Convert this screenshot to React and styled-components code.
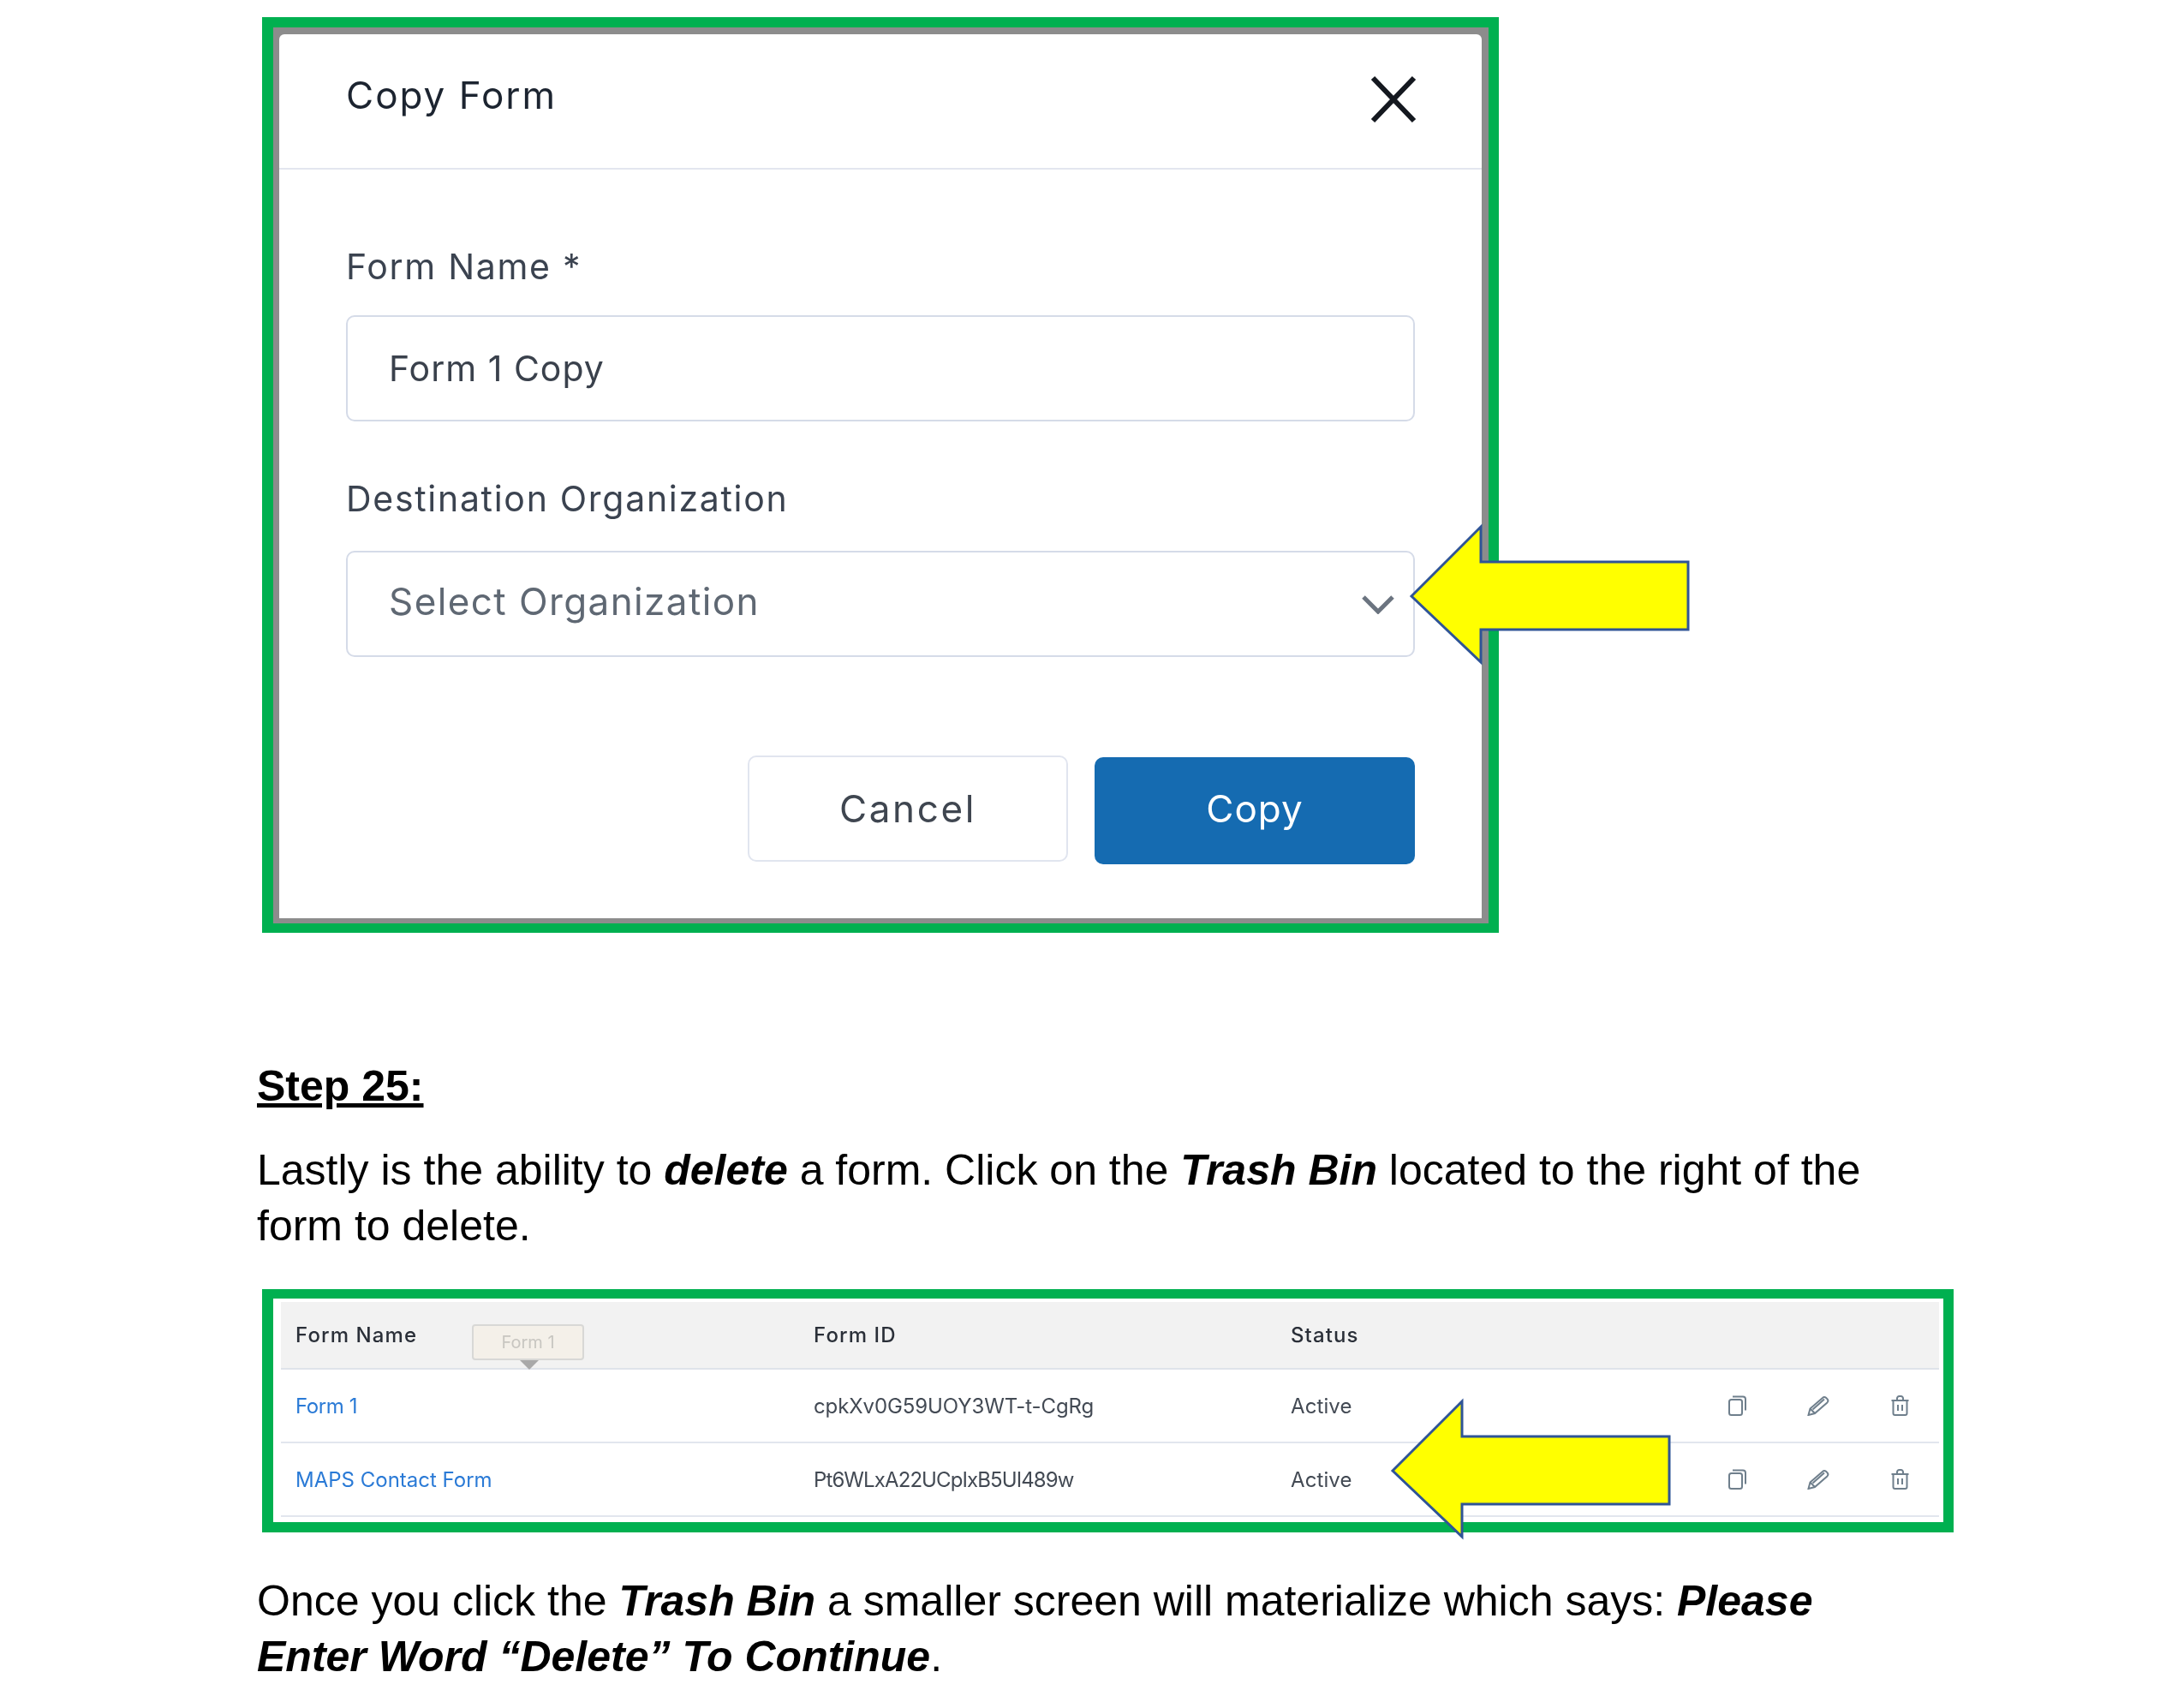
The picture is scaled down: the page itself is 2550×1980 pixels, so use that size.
import React from "react";
import styled, { createGlobalStyle } from "styled-components";

const GlobalStyle = createGlobalStyle`
  html, body {
    margin: 0;
    padding: 0;
    background: #fff;
  }
`;

const rows = [
  { name: "Form 1", nameSpacing: -0.4, id: "cpkXv0G59UOY3WT-t-CgRg", idSpacing: -0.1, status: "Active" },
  { name: "MAPS Contact Form", nameSpacing: 0, id: "Pt6WLxA22UCpIxB5UI489w", idSpacing: -0.9, status: "Active" },
];

const Arrow = ({ left, top }) => (
  <ArrowSvg $left={left} $top={top} viewBox="0 0 331 166">
    <polygon points="4,85 85,4 85,45 327,45 327,124 85,124 85,162" />
  </ArrowSvg>
);

const CopyIcon = () => (
  <IconSvg width="21" height="24" viewBox="0 0 21 24">
    <rect x="1" y="5" width="15" height="18" rx="2.5" />
    <path d="M5 1.5h12a3 3 0 0 1 3 3v13" />
  </IconSvg>
);

const PencilIcon = () => (
  <IconSvg width="26" height="24" viewBox="0 0 26 24">
    <path d="M1.5 23 3.5 15.5 18 3a3 3 0 0 1 4-.2l1.6 1.6a3 3 0 0 1-.2 4L9 21Z" />
    <path d="M3.5 15.5 9 21M6.5 16.5 20 4.5" />
  </IconSvg>
);

const TrashIcon = () => (
  <IconSvg width="21" height="24" viewBox="0 0 21 24">
    <path d="M.5 6h20M7 6V3.5A2.5 2.5 0 0 1 9.5 1h2A2.5 2.5 0 0 1 14 3.5V6" />
    <path d="M2.5 6v15a2 2 0 0 0 2 2h12a2 2 0 0 0 2-2V6" />
    <path d="M8 11v7M13 11v7" />
  </IconSvg>
);

const App = () => {
  return (
    <Page>
      <GlobalStyle />

      {/* Copy form dialog */}
      <Figure>
        <ModalFrame>
          <ModalShade>
            <Modal>
              <ModalHeader>
                <ModalTitle>Copy Form</ModalTitle>
                <CloseIcon viewBox="0 0 54 56">
                  <path d="M3 3 51 53M51 3 3 53" />
                </CloseIcon>
              </ModalHeader>
              <ModalBody>
                <Field $gap={27}>
                  <FieldLabel>Form Name *</FieldLabel>
                  <InputBox>Form 1 Copy</InputBox>
                </Field>
                <Field $gap={31}>
                  <FieldLabel>Destination Organization</FieldLabel>
                  <InputBox>
                    <Placeholder>Select Organization</Placeholder>
                    <Chevron viewBox="0 0 40 23">
                      <path d="M3 3 20 20 37 3" />
                    </Chevron>
                  </InputBox>
                </Field>
                <ButtonRow>
                  <CancelButton>Cancel</CancelButton>
                  <CopyButton>Copy</CopyButton>
                </ButtonRow>
              </ModalBody>
            </Modal>
          </ModalShade>
        </ModalFrame>
        <Arrow left={1338} top={591} />
      </Figure>

      <StepTitle>Step 25:</StepTitle>
      <Para>
        Lastly is the ability to <em>delete</em> a form. Click on the{" "}
        <em>Trash Bin</em> located to the right of the form to delete.
      </Para>

      {/* Forms table */}
      <TableFigure>
        <TableFrame>
          <HeaderRow>
            <HeadCell>
              Form Name
              <Tooltip>Form 1</Tooltip>
            </HeadCell>
            <HeadCell>Form ID</HeadCell>
            <HeadCell>Status</HeadCell>
          </HeaderRow>
          {rows.map((row) => (
            <BodyRow key={row.id}>
              <NameLink $spacing={row.nameSpacing}>{row.name}</NameLink>
              <BodyCell $spacing={row.idSpacing}>{row.id}</BodyCell>
              <BodyCell $spacing={0.1}>{row.status}</BodyCell>
              <Actions>
                <IconSlot><CopyIcon /></IconSlot>
                <IconSlot><PencilIcon /></IconSlot>
                <IconSlot><TrashIcon /></IconSlot>
              </Actions>
            </BodyRow>
          ))}
        </TableFrame>
        <Arrow left={1316} top={127} />
      </TableFigure>

      <LastPara>
        Once you click the <em>Trash Bin</em> a smaller screen will materialize
        which says: <em>Please Enter Word “Delete” To Continue</em>.
      </LastPara>
    </Page>
  );
};

// Styled Components

const Page = styled.div`
  width: 2550px;
  height: 1980px;
  box-sizing: border-box;
  padding: 20px 0 0 300px;
  background: #fff;
  overflow: hidden;
`;

const Figure = styled.div`
  position: relative;
  width: 1444px;
  margin-left: 6px;
`;

const ModalFrame = styled.div`
  box-sizing: border-box;
  width: 1444px;
  height: 1069px;
  border-style: solid;
  border-color: #00b050;
  border-width: 12px 12px 11px 13px;
`;

const ModalShade = styled.div`
  height: 100%;
  box-sizing: border-box;
  padding: 8px 8px 6px 7px;
  background: #8c8c8c;
`;

const Modal = styled.div`
  height: 100%;
  background: #fff;
  border-radius: 6px 6px 0 0;
  font-family: Inter, sans-serif;
  filter: blur(0.5px);
`;

const ModalHeader = styled.div`
  box-sizing: border-box;
  height: 158px;
  padding: 0 76px 0 78px;
  display: flex;
  align-items: center;
  justify-content: space-between;
  border-bottom: 2px solid #e3e6ef;
`;

const ModalTitle = styled.div`
  font-size: 44px;
  letter-spacing: 2px;
  color: #1c2430;
  margin-top: -14px;
`;

const CloseIcon = styled.svg`
  width: 54px;
  height: 56px;
  margin-top: -4px;
  fill: none;
  stroke: #14181f;
  stroke-width: 6;
`;

const ModalBody = styled.div`
  padding: 83px 78px 0;
  display: flex;
  flex-direction: column;
  gap: 60px;
`;

const Field = styled.div`
  display: flex;
  flex-direction: column;
  gap: ${(p) => p.$gap}px;
`;

const FieldLabel = styled.div`
  font-size: 41px;
  line-height: 60px;
  letter-spacing: 1.7px;
  color: #3b4350;
`;

const InputBox = styled.div`
  box-sizing: border-box;
  height: 124px;
  padding: 0 21px 0 48px;
  display: flex;
  align-items: center;
  justify-content: space-between;
  border: 2px solid #d5dbe8;
  border-radius: 10px;
  font-size: 41px;
  letter-spacing: 1px;
  color: #3a414c;
`;

const Placeholder = styled.span`
  margin-top: -6px;
  font-size: 44px;
  letter-spacing: 1.4px;
  color: #5f6873;
`;

const Chevron = styled.svg`
  width: 40px;
  height: 23px;
  fill: none;
  stroke: #6b7480;
  stroke-width: 5;
`;

const ButtonRow = styled.div`
  margin-top: 55px;
  display: flex;
  justify-content: flex-end;
  align-items: flex-start;
  gap: 31px;
`;

const CancelButton = styled.div`
  box-sizing: border-box;
  width: 374px;
  height: 124px;
  display: flex;
  align-items: center;
  justify-content: center;
  border: 2px solid #e1e5ef;
  border-radius: 10px;
  font-size: 44px;
  letter-spacing: 2.6px;
  color: #3f4650;
`;

const CopyButton = styled(CancelButton)`
  height: 125px;
  margin-top: 2px;
  padding-bottom: 5px;
  border: none;
  letter-spacing: 1px;
  background: #156bb1;
  color: #fff;
`;

const StepTitle = styled.div`
  margin-top: 147px;
  font-family: "Liberation Sans", Arial, sans-serif;
  font-size: 50px;
  line-height: 65px;
  font-weight: 700;
  text-decoration: underline;
  color: #000;
`;

const Para = styled.p`
  width: 1950px;
  margin: 33px 0 0;
  font-family: "Liberation Sans", Arial, sans-serif;
  font-size: 50px;
  line-height: 65px;
  color: #000;

  em {
    font-weight: 700;
    font-style: italic;
  }
`;

const LastPara = styled(Para)`
  margin-top: 48px;
`;

const TableFigure = styled.div`
  position: relative;
  width: 1975px;
  margin: 41px 0 0 6px;
`;

const TableFrame = styled.div`
  box-sizing: border-box;
  width: 1975px;
  height: 284px;
  padding: 4px 5px 0 9px;
  border-style: solid;
  border-color: #00b050;
  border-width: 11px 12px 12px 13px;
  background: #fff;
  font-family: Inter, sans-serif;
`;

const rowGrid = `
  display: grid;
  grid-template-columns: 605px 557px 1fr auto;
  align-items: center;
  box-sizing: border-box;
  padding-left: 17px;
  filter: blur(0.4px);
`;

const HeaderRow = styled.div`
  ${rowGrid}
  height: 79px;
  background: #f2f2f2;
  border-bottom: 2px solid #dfe3ea;
`;

const HeadCell = styled.div`
  position: relative;
  font-size: 24px;
  font-weight: 500;
  letter-spacing: 1.1px;
  color: #2a2f38;
`;

const Tooltip = styled.div`
  position: absolute;
  left: 206px;
  top: 2px;
  box-sizing: border-box;
  width: 131px;
  height: 42px;
  display: flex;
  align-items: center;
  justify-content: center;
  border: 2px solid #d8d8d6;
  border-radius: 4px;
  background: #f4f0e9;
  font-size: 20px;
  font-weight: 400;
  letter-spacing: 0;
  color: #c8c6c1;

  &::after {
    content: "";
    position: absolute;
    left: 54px;
    top: 40px;
    border-style: solid;
    border-width: 11px 11px 0;
    border-color: #a9a9a9 transparent transparent;
  }
`;

const BodyRow = styled.div`
  ${rowGrid}
  height: 86px;
  border-bottom: 2px solid #e2e6ee;
`;

const BodyCell = styled.div`
  font-size: 24px;
  letter-spacing: ${(p) => p.$spacing}px;
  color: #434a54;
`;

const NameLink = styled(BodyCell)`
  color: #2a7ad6;
`;

const Actions = styled.div`
  display: flex;
  gap: 69px;
  padding-right: 33px;
`;

const IconSlot = styled.div`
  width: 26px;
  display: flex;
  justify-content: center;
`;

const IconSvg = styled.svg`
  fill: none;
  stroke: #6f7f8c;
  stroke-width: 2;
`;

const ArrowSvg = styled.svg`
  position: absolute;
  left: ${(p) => p.$left}px;
  top: ${(p) => p.$top}px;
  width: 331px;
  height: 166px;

  polygon {
    fill: #ffff00;
    stroke: #2f5496;
    stroke-width: 3;
  }
`;

export default App;
